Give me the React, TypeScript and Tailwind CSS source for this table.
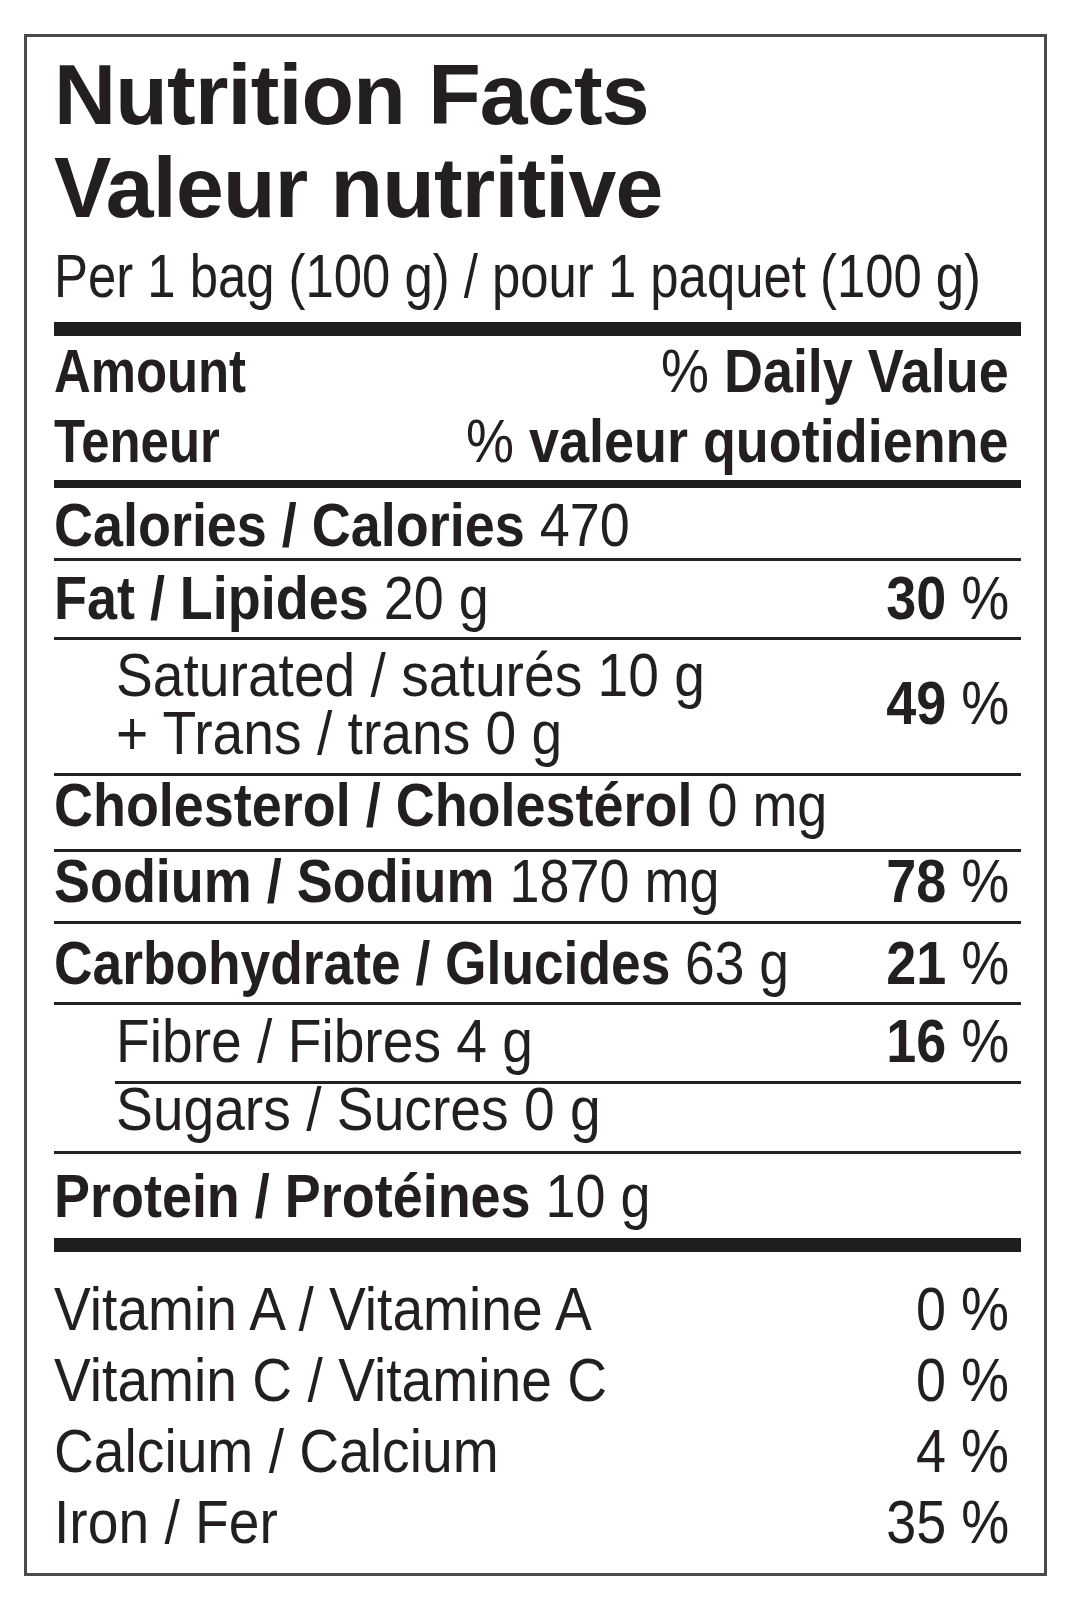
import type { ReactNode } from "react";

// Liberation Sans squeezed sideways stands in for Helvetica Condensed
function Cond({
  children,
  right = false,
  squeeze = "bold",
}: {
  children: ReactNode;
  right?: boolean;
  squeeze?: "bold" | "regular" | "tight" | "mid";
}) {
  const origin = right ? "origin-right" : "origin-left";
  const scale =
    squeeze === "tight"
      ? "scale-x-[0.82]"
      : squeeze === "mid"
        ? "scale-x-[0.86]"
        : squeeze === "regular"
          ? "scale-x-[0.89]"
          : "scale-x-[0.87]";
  return <span className={`inline-block whitespace-nowrap ${origin} ${scale}`}>{children}</span>;
}

function Pct({ n, boldNum = true }: { n: string; boldNum?: boolean }) {
  return (
    <div className="shrink-0">
      <Cond right>
        <span className={boldNum ? "font-bold" : ""}>{n}</span> %
      </Cond>
    </div>
  );
}

function Line({ indent = false }: { indent?: boolean }) {
  return <div className={indent ? "ml-[61px] h-[3px] bg-[#222]" : "h-[3px] bg-[#222]"} />;
}

export default function App() {
  const vitamins = [
    { label: "Vitamin A / Vitamine A", dv: "0" },
    { label: "Vitamin C / Vitamine C", dv: "0" },
    { label: "Calcium / Calcium", dv: "4" },
    { label: "Iron / Fer", dv: "35" },
  ];

  return (
    <div className="min-h-[1600px] w-[1084px] overflow-hidden bg-white pl-[24px] pt-[34px] font-['Liberation_Sans',Arial,sans-serif] text-[#231f20]">
      <div className="w-[1023px] overflow-hidden border-[3px] border-[#4a4a4a] pl-[27px] pr-[23px] pt-[11px] pb-[16px]">
        {/* heading */}
        <div className="text-[86px] font-bold leading-[93px] tracking-[-0.8px]">
          <div>Nutrition Facts</div>
          <div>Valeur nutritive</div>
        </div>
        <div className="mt-[11px] text-[62px] leading-[62px]">
          <Cond squeeze="tight">Per 1 bag (100 g) / pour 1 paquet (100 g)</Cond>
        </div>
        <div className="mt-[15px] h-[14px] bg-[#1e1e1e]" />

        <div className="text-[62px]">
          {/* column headers */}
          <div className="flex h-[144px] justify-between pr-[12px] leading-[70px]">
            <div className="font-bold">
              <div>
                <Cond squeeze="tight">Amount</Cond>
              </div>
              <div>
                <Cond squeeze="tight">Teneur</Cond>
              </div>
            </div>
            <div className="text-right">
              <div>
                <Cond right>
                  % <span className="font-bold">Daily Value</span>
                </Cond>
              </div>
              <div>
                <Cond right>
                  % <span className="font-bold">valeur quotidienne</span>
                </Cond>
              </div>
            </div>
          </div>
          <div className="h-[8px] bg-[#1e1e1e]" />

          {/* calories */}
          <div className="h-[70px] pt-[8px] leading-[58px]">
            <Cond>
              <span className="font-bold">Calories / Calories</span> 470
            </Cond>
          </div>
          <Line />

          <div className="flex h-[76px] justify-between pt-[8px] pr-[12px] leading-[58px]">
            <div className="min-w-0 flex-1">
              <Cond>
                <span className="font-bold">Fat / Lipides</span> 20 g
              </Cond>
            </div>
            <Pct n="30" />
          </div>
          <Line />

          <div className="flex h-[133px] justify-between pr-[12px] leading-[58px]">
            <div className="min-w-0 flex-1 pl-[62px] pt-[6px]">
              <div>
                <Cond squeeze="regular">Saturated / saturés 10 g</Cond>
              </div>
              <div>
                <Cond squeeze="regular">+ Trans / trans 0 g</Cond>
              </div>
            </div>
            <div className="pt-[34px]">
              <Pct n="49" />
            </div>
          </div>
          <Line />

          <div className="h-[73px] leading-[58px]">
            <Cond>
              <span className="font-bold">Cholesterol / Cholestérol</span> 0 mg
            </Cond>
          </div>
          <Line />

          <div className="flex h-[69px] justify-between pr-[12px] leading-[58px]">
            <div className="min-w-0 flex-1">
              <Cond>
                <span className="font-bold">Sodium / Sodium</span> 1870 mg
              </Cond>
            </div>
            <Pct n="78" />
          </div>
          <Line />

          <div className="flex h-[78px] justify-between pt-[10px] pr-[12px] leading-[58px]">
            <div className="min-w-0 flex-1">
              <Cond squeeze="mid">
                <span className="font-bold">Carbohydrate / Glucides</span> 63 g
              </Cond>
            </div>
            <Pct n="21" />
          </div>
          <Line />

          <div className="flex h-[76px] justify-between pt-[7px] pr-[12px] leading-[58px]">
            <div className="min-w-0 flex-1 pl-[62px]">
              <Cond squeeze="regular">Fibre / Fibres 4 g</Cond>
            </div>
            <Pct n="16" />
          </div>
          <Line indent />

          <div className="h-[67px] pl-[62px] leading-[50px]">
            <Cond squeeze="regular">Sugars / Sucres 0 g</Cond>
          </div>
          <Line />

          <div className="h-[84px] pt-[13px] leading-[58px]">
            <Cond>
              <span className="font-bold">Protein / Protéines</span> 10 g
            </Cond>
          </div>
          <div className="h-[14px] bg-[#1e1e1e]" />

          {/* vitamins and minerals */}
          <div className="pt-[21px] pr-[12px] leading-[71px]">
            {vitamins.map((v) => (
              <div key={v.label} className="flex justify-between">
                <div className="min-w-0 flex-1">
                  <Cond squeeze="regular">{v.label}</Cond>
                </div>
                <Pct n={v.dv} boldNum={false} />
              </div>
            ))}
          </div>
        </div>
      </div>
    </div>
  );
}
